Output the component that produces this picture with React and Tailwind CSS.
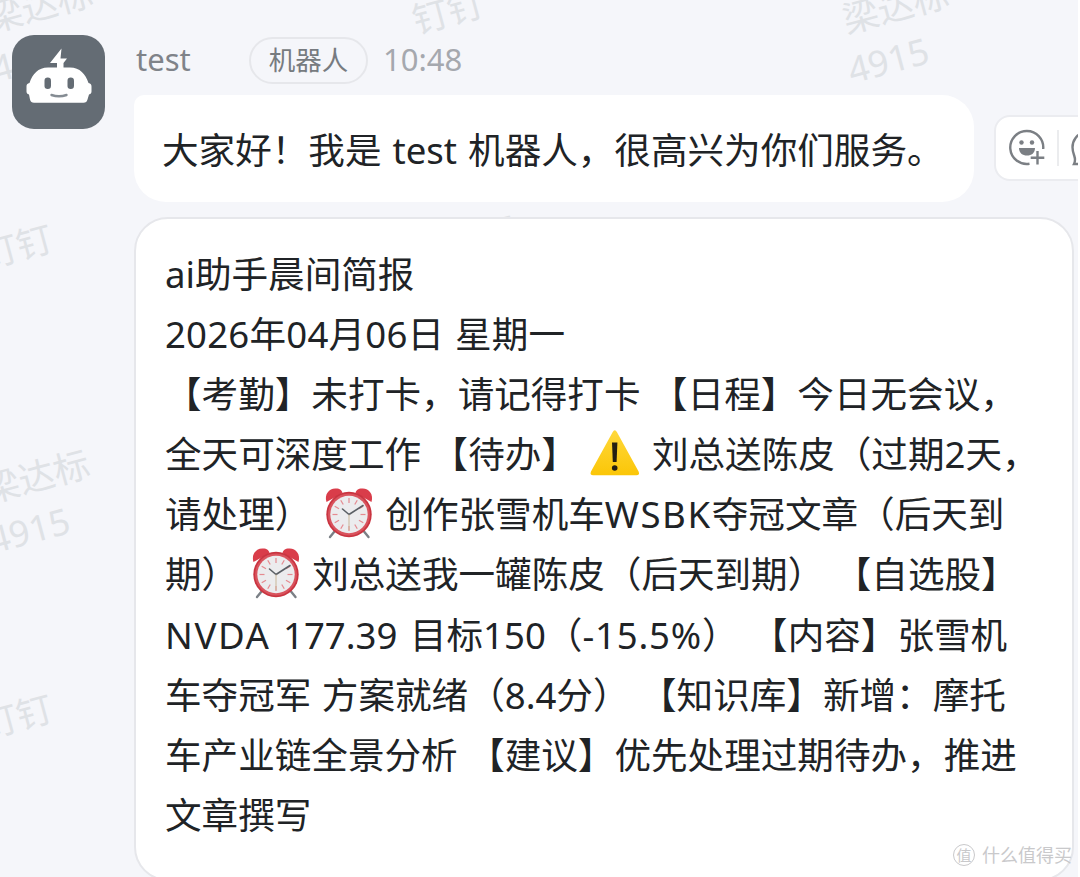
import React from 'react'

const briefing = [
  { text: 'ai助手晨间简报' },
  { text: '2026年04月06日 ', after: '星期一', className: 'tracking-[0.200px]' },
  { text: '【考勤】未打卡，请记得打卡 【日程】今日无会议，' },
  { text: '全天可深度工作 【待办】 ', icon: 'warning', after: ' 刘总送陈皮（过期2天，' },
  { text: '请处理） ', icon: 'alarm', after: ' 创作张雪机车', wide: 'WSBK', rest: '夺冠文章（后天到' },
  { text: '期） ', icon: 'alarm', after: ' 刘总送我一罐陈皮（后天到期） 【自选股】' },
  {
    wide: 'NVDA',
    rest: ' 177.39 目标150（',
    wideEnd: '-15.5%',
    end: '） 【内容】张雪机',
    className: '[word-spacing:3px]',
  },
  { text: '车夺冠军 方案就绪（8.4分） 【知识库】新增：摩托' },
  { text: '车产业链全景分析 【建议】优先处理过期待办，推进' },
  { text: '文章撰写' },
]

const ticks = [0, 30, 60, 90, 120, 150, 180, 210, 240, 270, 300, 330]

const WarningIcon = () => (
  <svg className="inline-block w-[53px] h-[52px] align-[-11px]" viewBox="0 0 53 52" fill="none">
    <defs>
      <linearGradient id="warn" x1="0" y1="0" x2="0" y2="1">
        <stop offset="0" stopColor="#ffd83a" />
        <stop offset="1" stopColor="#fbc608" />
      </linearGradient>
    </defs>
    <path d="M24.6 5.2q2.2-4 4.4 0L50.6 44.4q1.6 3.8-2.2 3.8H5.2q-3.8 0-2.2-3.8z" fill="url(#warn)" />
    <path d="M24 15.5h5.4l-.8 19.5h-3.8z" fill="#241f12" />
    <circle cx="26.7" cy="41" r="2.8" fill="#241f12" />
  </svg>
)

const AlarmIcon = () => (
  <svg className="inline-block w-[53px] h-[52px] align-[-12px]" viewBox="0 0 53 52" fill="none">
    <path d="M12.5 43.5L8 49M42 43.5l4.5 5.5" stroke="#7b8086" strokeWidth="2.4" strokeLinecap="round" />
    <path d="M4.5 14C2 6 7.5 0 14 .5c4 0 6 2 6.5 4.5z" fill="#d93d4a" />
    <path d="M49.5 14C52 6 46.5 0 40 .5c-4 0-6 2-6.5 4.5z" fill="#d93d4a" />
    <circle cx="27" cy="26.5" r="22.7" fill="#c93440" />
    <circle cx="27" cy="26.5" r="21" fill="#d9535d" />
    <circle cx="27" cy="26.5" r="18.7" fill="#ececee" />
    {ticks.map((t) => (
      <path key={t} d="M27 10v5" stroke="#e58a90" strokeWidth="1.2" transform={`rotate(${t} 27 26.5)`} />
    ))}
    <path d="M20.500 21L27 26.500 41 17.500" stroke="#5b6066" strokeWidth="1.6" strokeLinecap="round" strokeLinejoin="round" />
    <path d="M27 26.5V42" stroke="#c9b89a" strokeWidth="1" />
  </svg>
)

const RobotAvatar = () => (
  <svg className="w-[93px] h-[94px] shrink-0" viewBox="0 0 93 94" fill="none">
    <rect width="93" height="94" rx="22" fill="#646c74" />
    <path d="M49.5 13.500L38 28h7v7h6.500v-7L55 23.500h-6.500z" fill="#fff" />
    <path
      d="M36 32.5h22c10 0 15.5 6.500 18.500 15.500 2.300.5 3 1.500 3 3.500v5c0 1.700-.8 2.500-2.500 3l-1.500 5c-.6 2.300-1.800 3.300-4 3.300H22c-2.200 0-3.400-1-4-3.300l-1-5c-1.700-.5-2.500-1.300-2.500-3v-5c0-2 .7-3 3-3.500 3-9 8.500-15.500 18.500-15.500z"
      fill="#fff"
    />
    <rect x="32.500" y="42.500" width="6.500" height="11.500" rx="3.200" fill="#646c74" />
    <rect x="55.500" y="42.500" width="6.500" height="11.500" rx="3.200" fill="#646c74" />
    <path d="M39.5 60c4.500 1.500 10.500 1.500 15 0" stroke="#858c93" strokeWidth="2.400" strokeLinecap="round" />
  </svg>
)

const ReactionBar = () => (
  <div className="ml-5 mt-5 flex h-[66px] w-[120px] shrink-0 items-center rounded-[16px] border-2 border-[#ebecf0] bg-white pl-3">
    <svg className="size-[38px] shrink-0" viewBox="0 0 38 38" fill="none">
      <path d="M35.2 20A16.5 16.5 0 1 0 21.5 34.8" stroke="#7b7f84" strokeWidth="2.4" />
      <circle cx="13.5" cy="13.5" r="2.2" fill="#7b7f84" />
      <circle cx="24" cy="13.5" r="2.2" fill="#7b7f84" />
      <path d="M11 19h16c0 5-3.5 7.5-8 7.5S11 24 11 19z" fill="#7b7f84" />
      <path d="M29.5 22v13.500M22.700 28.800h13.600" stroke="#7b7f84" strokeWidth="2.4" />
    </svg>
    <div className="ml-[11px] h-9 w-0.5 shrink-0 bg-[#ebecee]" />
    <svg className="ml-3 size-[38px] shrink-0" viewBox="0 0 38 38" fill="none">
      <path d="M3 35c2-4 1-6 0-9C-2 12 7 2.500 18.500 2.500S35.500 10 35.500 19 28 35 18 35z" stroke="#7b7f84" strokeWidth="2.4" />
    </svg>
  </div>
)

const NameMark = ({ className }) => (
  <div className={`absolute -rotate-[15deg] whitespace-nowrap text-[36px] leading-[50px] text-[#dfe2e6] ${className}`}>
    <div>梁达标</div>
    <div className="-ml-2">4915</div>
  </div>
)

const BrandMark = ({ className }) => (
  <div className={`absolute -rotate-[15deg] whitespace-nowrap text-[36px] leading-[50px] text-[#dfe2e6] ${className}`}>
    钉钉
  </div>
)

const App = () => {
  return (
    <div className="relative h-[877px] w-[1080px] overflow-hidden bg-[#f5f6fa] font-['Noto_Sans','Noto_Sans_CJK_SC',sans-serif] text-[#202326] [text-spacing-trim:space-all]">
      <NameMark className="left-[-8px] top-[-20px]" />
      <BrandMark className="left-[412px] top-[-13px]" />
      <NameMark className="left-[848px] top-[-19px]" />
      <BrandMark className="left-[-19px] top-[222px]" />
      <BrandMark className="left-[444px] top-[213px]" />
      <NameMark className="left-[-11px] top-[451px]" />
      <BrandMark className="left-[-19px] top-[692px]" />

      <div className="relative flex w-[1200px] items-start pl-3 pt-[35px]">
        <RobotAvatar />
        <div className="ml-[29px]">
          <div className="flex h-[60px] items-start">
            <span className="w-[115px] pl-[2px] text-[31px] leading-[48px] text-[#7f8389]">test</span>
            <span className="mt-[2px] flex h-[47px] w-[119px] items-center justify-center rounded-full border-2 border-[#e6e7eb] text-[26.5px] leading-none text-[#777b80]">
              机器人
            </span>
            <span className="ml-[15px] text-[31px] leading-[48px] text-[#a5a8ae]">10:48</span>
          </div>
          <div className="flex items-start">
            <div className="flex h-[107px] w-[840px] shrink-0 items-center whitespace-nowrap rounded-[32px] rounded-tl-[10px] bg-white pl-[28px] pt-[3px] text-[36.6px] [word-spacing:1.5px]">
              大家好！我是 test 机器人，很高兴为你们服务。
            </div>
            <ReactionBar />
          </div>
          <div className="mt-[15px] h-[664px] w-[940px] rounded-[34px] border-2 border-[#e6e7eb] bg-white pl-[29px] pt-[25px] text-[36.6px] leading-[60.1px] [word-spacing:1px]">
            {briefing.map((line, i) => (
              <div key={i} className={`h-[60.1px] whitespace-pre ${line.className || ''}`}>
                {line.text}
                {line.icon === 'warning' && <WarningIcon />}
                {line.icon === 'alarm' && <AlarmIcon />}
                {line.after}
                {line.wide && <span className="tracking-[1.6px]">{line.wide}</span>}
                {line.rest}
                {line.wideEnd && <span className="tracking-[0.8px]">{line.wideEnd}</span>}
                {line.end}
              </div>
            ))}
          </div>
        </div>
      </div>

      <div className="absolute bottom-[9px] right-[8px] flex items-center text-[18px] leading-[26px] text-[#c9c9cb]">
        <span className="mr-[7px] flex size-[22px] items-center justify-center rounded-full border border-[#c9c9cb] text-[15px] leading-none">值</span>
        什么值得买
      </div>
      <div className="absolute inset-y-0 right-0 w-0.5 bg-white" />
    </div>
  )
}

export default App
